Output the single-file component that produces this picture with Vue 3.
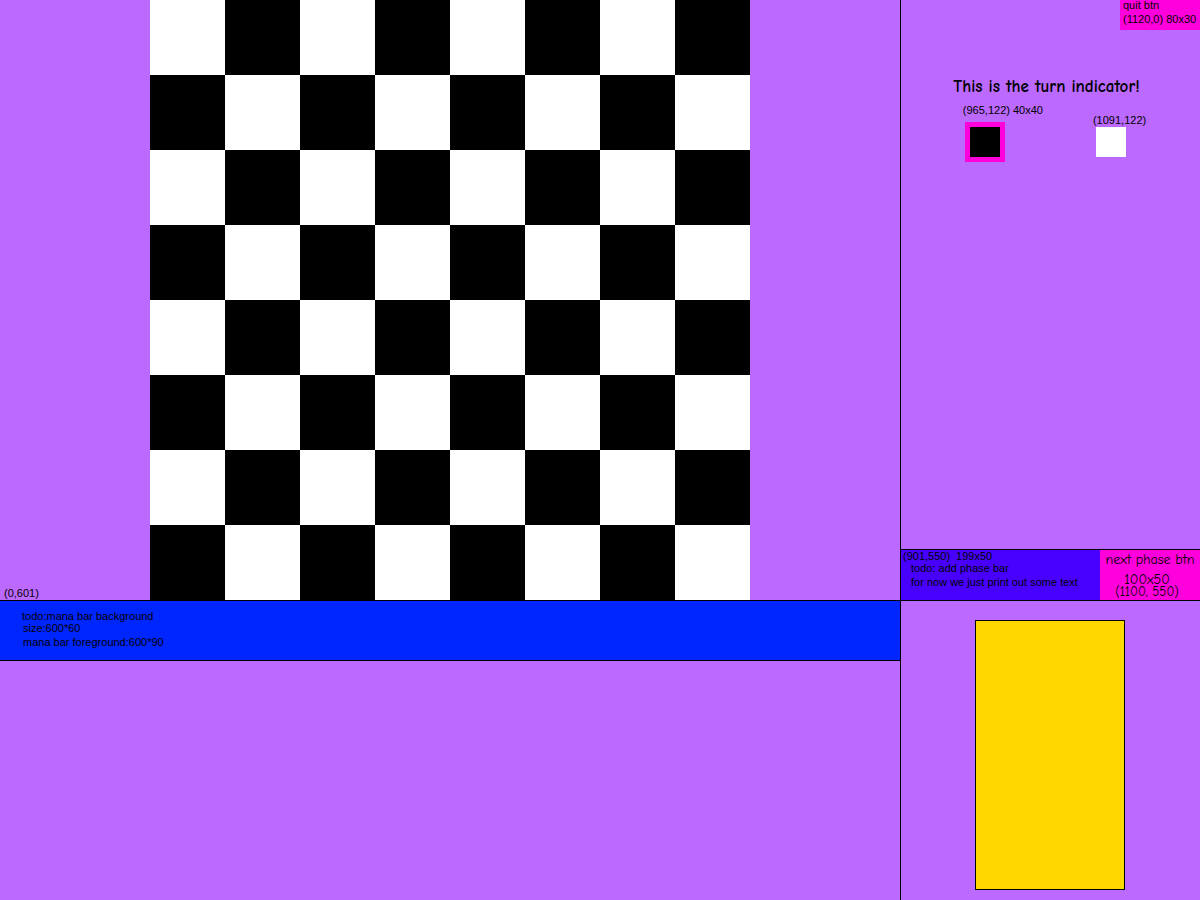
<script setup>
const squares = Array.from({ length: 64 }, (_, i) => ({
  id: i,
  dark: (Math.floor(i / 8) + i) % 2 === 1,
}))
</script>

<template>
  <main class="game">
    <section class="table">
      <div class="arena">
        <span class="origin">(0,601)</span>
        <div class="board">
          <div v-for="s in squares" :key="s.id" :class="['square', { dark: s.dark }]"></div>
        </div>
      </div>
      <div class="mana">
        <p class="mana-title">todo:mana bar background</p>
        <p class="mana-size">size:600*60</p>
        <p class="mana-front">mana bar foreground:600*90</p>
      </div>
      <div class="hand"></div>
    </section>

    <aside class="side">
      <div class="info">
        <button class="quit" type="button">
          <span class="quit-text">quit btn<br />(1120,0) 80x30</span>
        </button>
        <h1 class="turn-title">This is the turn indicator!</h1>
        <div class="turns">
          <div class="turn first">
            <span class="turn-label">(965,122) 40x40</span>
            <div class="token active black"></div>
          </div>
          <div class="turn second">
            <span class="turn-label">(1091,122)</span>
            <div class="token"></div>
          </div>
        </div>
      </div>
      <div class="phase">
        <div class="phase-bar">
          <p class="phase-pos"><span>(901,550)</span><span>199x50</span></p>
          <p class="phase-todo">todo: add phase bar</p>
          <p class="phase-note">for now we just print out some text</p>
        </div>
        <button class="next" type="button">
          <span class="next-name">next phase btn</span>
          <span class="next-size">100x50</span>
          <span class="next-pos">(1100, 550)</span>
        </button>
      </div>
      <div class="deck">
        <div class="card"></div>
      </div>
    </aside>
  </main>
</template>

<style>
body {
  margin: 0;
  background: #bb69ff;
}
</style>

<style scoped>
.game {
  display: grid;
  grid-template-columns: minmax(0, 3fr) minmax(0, 1fr);
  min-height: 100vh;
  color: #000;
  font: 11px/12px "Liberation Sans", Arial, sans-serif;
  white-space: nowrap;
}
p,
h1 {
  margin: 0;
}
button {
  box-sizing: border-box;
  border: 0;
  padding: 0;
  color: inherit;
  font: inherit;
  background: #ff00dc;
  cursor: pointer;
}
.table,
.side {
  display: flex;
  flex-direction: column;
}
.arena {
  position: relative;
  display: flex;
  justify-content: center;
}
.origin {
  position: absolute;
  left: 4px;
  bottom: 1px;
}
.board {
  display: grid;
  grid-template-columns: repeat(8, 75px);
  grid-auto-rows: 75px;
}
.square {
  background: #fff;
}
.square.dark {
  background: #000;
}
.mana {
  box-sizing: border-box;
  height: 61px;
  padding: 10px 22px;
  border-top: 1px solid #000;
  border-bottom: 1px solid #000;
  background: #0026ff;
}
.mana-title {
  line-height: 11px;
}
.mana-size,
.mana-front {
  padding-left: 1px;
}
.mana-front {
  padding-top: 2px;
}
.hand {
  flex: 1;
}
.side {
  border-left: 1px solid #000;
}
.info {
  display: flex;
  flex-direction: column;
  height: 549px;
}
.quit {
  align-self: flex-end;
  width: 80px;
  height: 30px;
  padding-left: 3px;
  line-height: 14px;
  text-align: left;
}
.quit-text {
  display: block;
  margin-top: -6px;
}
.turn-title {
  margin-top: 47px;
  padding-right: 8px;
  font: bold 17px/20px "Comic Sans MS", "Comic Neue", Lato, sans-serif;
  text-align: center;
}
.turns {
  display: flex;
  justify-content: center;
  align-items: flex-end;
  gap: 48px;
  margin-top: 7px;
  padding-left: 8px;
}
.turn {
  display: flex;
  flex-direction: column;
}
.token {
  box-sizing: border-box;
  width: 40px;
  height: 40px;
  border: 5px solid transparent;
  background: #fff padding-box;
}
.token.black {
  background-color: #000;
}
.token.active {
  border-color: #ff00dc;
}
.turn-label {
  margin-bottom: 6px;
}
.first .token {
  margin-left: 2px;
}
.second .turn-label {
  margin: 0 0 -4px 2px;
}
.phase {
  display: flex;
  height: 50px;
  border-top: 1px solid #000;
  border-bottom: 1px solid #000;
}
.phase-bar {
  flex: 1;
  padding-left: 2px;
  background: #4800ff;
}
.phase-pos {
  display: flex;
  gap: 6px;
}
.phase-todo,
.phase-note {
  padding-left: 8px;
}
.phase-note {
  padding-top: 2px;
}
.next {
  display: flex;
  flex-direction: column;
  align-items: center;
  width: 100px;
  padding-right: 6px;
  font: 13px/12px "Comic Sans MS", "Comic Neue", Lato, sans-serif;
}
.next-name {
  margin: 4px -6px 8px 0;
}
.next-name,
.next-size {
  font-size: 14px;
}
.deck {
  display: flex;
  flex: 1;
  justify-content: center;
  padding: 19px 1px 10px 0;
}
.card {
  box-sizing: border-box;
  width: 150px;
  min-height: 270px;
  border: 1px solid #000;
  background: #ffd800;
}
</style>
